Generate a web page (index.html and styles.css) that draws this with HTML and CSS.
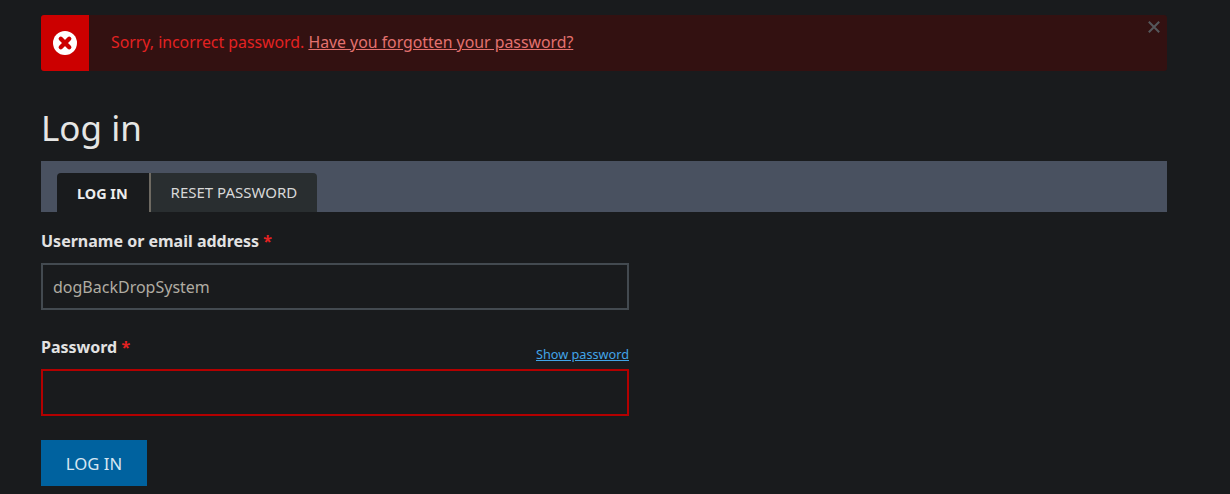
FILE: index.html
```html
<!DOCTYPE html>
<html lang="en">
<head>
  <meta charset="UTF-8">
  <title>Log in</title>
  <meta name="viewport" content="width=device-width, initial-scale=1">
  <link rel="stylesheet" href="styles.css">
</head>
<body>

  <div class="page">

    <!-- error message -->
    <div class="alert">
      <div class="alert-icon">
        <svg width="24" height="24" viewBox="0 0 24 24">
          <circle cx="12" cy="12" r="12" fill="#fff"/>
          <path d="M7.8 7.8L16.2 16.2M16.2 7.8L7.8 16.2" stroke="#cc0000" stroke-width="4.4" stroke-linecap="round"/>
        </svg>
      </div>
      <div class="alert-text">Sorry, incorrect password. <a href="#">Have you forgotten your password?</a></div>
      <button class="alert-close" aria-label="Close">
        <svg width="12" height="12" viewBox="0 0 12 12">
          <path d="M0.8 0.8L11.2 11.2M11.2 0.8L0.8 11.2" stroke="#55585c" stroke-width="2"/>
        </svg>
      </button>
    </div>

    <h1 class="title">Log in</h1>

    <div class="tabs">
      <a class="tab active" href="#">Log in</a>
      <a class="tab" href="#">Reset password</a>
    </div>

    <form class="login-form">
      <div class="field">
        <label class="field-label" for="username">Username or email address <span class="req">*</span></label>
        <input class="input" id="username" type="text" value="dogBackDropSystem">
      </div>

      <div class="field">
        <div class="label-row">
          <label class="field-label" for="password">Password <span class="req">*</span></label>
          <a class="show-pass" href="#">Show password</a>
        </div>
        <input class="input input-error" id="password" type="password">
      </div>

      <button class="btn" type="button">Log in</button>
    </form>

  </div>

</body>
</html>
```

FILE: styles.css
```css
* { box-sizing: border-box; margin: 0; padding: 0; }

body {
  font-family: "Noto Sans", sans-serif;
  background: #191b1d;
  color: #e6e6e6;
  font-size: 16px;
}

.page {
  width: 1126px;
  margin-left: 41px;
  padding-top: 15px;
}

/* alert */
.alert {
  display: flex;
  align-items: center;
  position: relative;
  height: 56px;
  background: #331111;
  border-radius: 3px;
}

.alert-icon {
  width: 48px;
  height: 56px;
  flex: none;
  display: flex;
  align-items: center;
  justify-content: center;
  background: #cc0000;
  border-radius: 3px 0 0 3px;
}

.alert-text {
  margin: -2px 0 0 22px;
  font-size: 15.84px;
  color: #e42222;
}

.alert-text a {
  color: #e4716f;
}

.alert-close {
  position: absolute;
  top: 6px;
  right: 7px;
  width: 12px;
  height: 12px;
  background: none;
  border: none;
  cursor: pointer;
}

.title {
  margin-top: 32px;
  font-size: 35px;
  font-weight: 400;
  line-height: 50px;
  color: #e6e6e4;
}

/* tabs */
.tabs {
  display: flex;
  height: 51px;
  margin-top: 8px;
  padding: 12px 0 0 16px;
  background: #495160;
}

.tab {
  padding: 0 20px;
  height: 39px;
  line-height: 38px;
  font-size: 15px;
  text-transform: uppercase;
  text-decoration: none;
  color: #d8d8d8;
  background: #292e30;
  border-radius: 0 4px 0 0;
}

.tab.active {
  font-size: 14.4px;
  line-height: 42px;
  font-weight: 700;
  color: #ececec;
  background: #191b1d;
  border-right: 2px solid #6e6a62;
  border-radius: 4px 0 0 0;
  padding-right: 21px;
}

/* form */
.login-form {
  width: 588px;
}

.field {
  margin-top: 17px;
}

.field + .field {
  margin-top: 25px;
}

.field-label {
  display: block;
  height: 24px;
  line-height: 24px;
  font-size: 16px;
  font-weight: 700;
  color: #e2e2e2;
}

.req {
  color: #e62222;
}

.label-row {
  display: flex;
  justify-content: space-between;
  align-items: flex-end;
}

.show-pass {
  font-size: 12.7px;
  line-height: 20px;
  margin-bottom: -5px;
  color: #42a5e8;
}

.input {
  display: block;
  width: 100%;
  height: 47px;
  margin-top: 10px;
  padding: 0 10px;
  font-family: inherit;
  font-size: 16px;
  color: #b0aca2;
  background: #191b1d;
  border: 2px solid #434a50;
  outline: none;
}

.input-error {
  border-color: #b30000;
}

.btn {
  display: block;
  width: 106px;
  height: 46px;
  margin-top: 24px;
  font-family: inherit;
  font-size: 16.7px;
  text-transform: uppercase;
  color: #d5e6f2;
  background: #00629f;
  border: none;
  cursor: pointer;
}
```
